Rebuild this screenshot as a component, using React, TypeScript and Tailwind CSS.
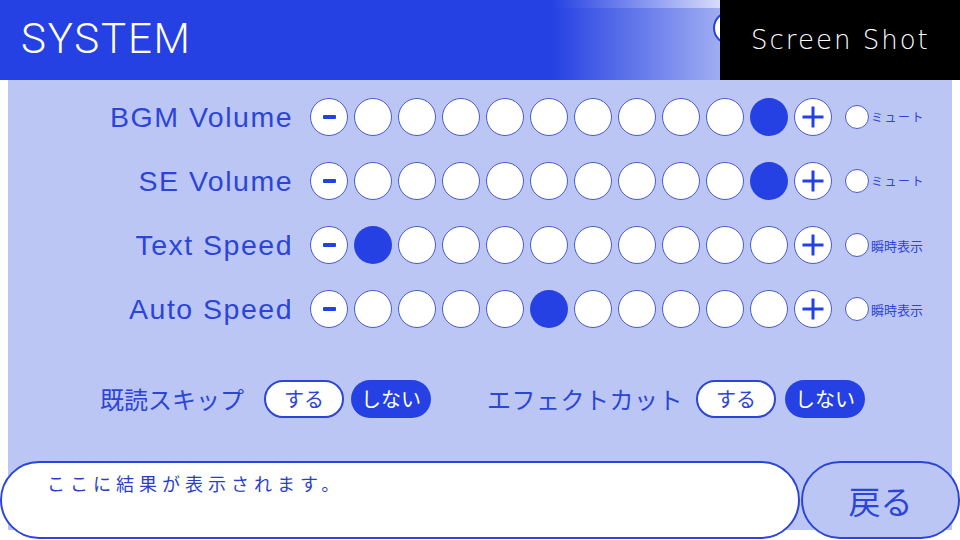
import React from "react";

const jp = '"Noto Sans CJK JP", "Noto Sans", sans-serif';

function Circle({ filled, children }: { filled?: boolean; children?: React.ReactNode }) {
  return (
    <div
      className={
        "w-[38px] h-[38px] rounded-full flex items-center justify-center shrink-0 " +
        (filled ? "bg-[#2541e3]" : "bg-white border-[1.5px] border-[#4a5ad0]")
      }
    >
      {children}
    </div>
  );
}

function Minus() {
  return <span className="block w-[13px] h-[3.5px] bg-[#2541e3] rounded-[1px]" />;
}

function Plus() {
  return (
    <svg width="24" height="24" viewBox="0 0 24 24">
      <path d="M12 1.5v21M1.5 12h21" stroke="#2541e3" strokeWidth="3" fill="none" />
    </svg>
  );
}

function SliderRow({ label, value, option, small }: { label: string; value: number; option: string; small?: boolean }) {
  return (
    <div className="flex items-center h-[38px]">
      <div
        className="w-[285px] text-right text-[28.5px] leading-none tracking-[1.5px] text-[#2b45d8]"
        style={{ fontFamily: '"Liberation Sans", Arial, sans-serif' }}
      >
        {label}
      </div>
      <div className="ml-[17px] flex gap-[6px]">
        <Circle>
          <Minus />
        </Circle>
        {Array.from({ length: 10 }).map((_, i) => (
          <Circle key={i} filled={i === value} />
        ))}
        <Circle>
          <Plus />
        </Circle>
      </div>
      <div className="ml-[13px] flex items-center gap-[2px]">
        <div className="w-[24px] h-[24px] rounded-full bg-white border-[1.5px] border-[#4a5ad0]" />
        <span
          className={(small ? "text-[12px] tracking-[1.5px]" : "text-[13px]") + " text-[#2b45d8] leading-none"}
          style={{ fontFamily: jp }}
        >
          {option}
        </span>
      </div>
    </div>
  );
}

function Pill({ label, active }: { label: string; active?: boolean }) {
  return (
    <div
      className={
        "w-[80px] h-[38px] rounded-full flex items-center justify-center text-[20px] leading-none " +
        (active ? "bg-[#2541e3] text-white" : "bg-white border-2 border-[#2b45d8] text-[#2b45d8]")
      }
    >
      {label}
    </div>
  );
}

export default function App() {
  return (
    <div className="relative w-[960px] h-[540px] bg-white overflow-hidden flex flex-col" style={{ fontFamily: jp }}>
      {/* header */}
      <div className="relative z-10 h-[80px] flex bg-[linear-gradient(to_right,#2541e3_57.5%,rgba(37,65,227,0)_79%)]">
        <div
          className="pl-[21px] pt-[18px] text-[42px] leading-none font-light tracking-[1.8px] text-white"
          style={{ fontFamily: 'Roboto, "Liberation Sans", sans-serif' }}
        >
          SYSTEM
        </div>
        <div className="ml-auto relative w-[240px] h-[80px] bg-black flex items-center pl-[31px]">
          <div className="absolute -left-[7px] top-[11px] w-[34px] h-[34px] rounded-full bg-white border-2 border-[#2b45d8] -z-10" />
          <span
            className="text-[26px] tracking-[2px] text-white font-light"
            style={{ fontFamily: '"DejaVu Sans", sans-serif' }}
          >
            Screen Shot
          </span>
        </div>
      </div>

      {/* panel */}
      <div className="mx-2 -mt-[72px] h-[522px] bg-[#bcc6f5] flex flex-col pt-[90px]">
        <div className="flex flex-col gap-[26px]">
          <SliderRow label="BGM Volume" value={9} option="ミュート" small />
          <SliderRow label="SE Volume" value={9} option="ミュート" small />
          <SliderRow label="Text Speed" value={0} option="瞬時表示" />
          <SliderRow label="Auto Speed" value={4} option="瞬時表示" />
        </div>

        <div className="mt-[52px] flex items-center pl-[92px] text-[#2b45d8]">
          <span className="text-[24px] leading-none">既読スキップ</span>
          <div className="ml-[20px] flex gap-[7px]">
            <Pill label="する" />
            <Pill label="しない" active />
          </div>
          <span className="ml-[56px] text-[24px] leading-none tracking-[0.5px]">エフェクトカット</span>
          <div className="ml-[13px] flex gap-[9px]">
            <Pill label="する" />
            <Pill label="しない" active />
          </div>
        </div>
      </div>

      {/* bottom bar */}
      <div className="relative -mt-[69px] flex h-[78px]">
        <div className="w-[800px] h-full rounded-[40px] bg-white border-2 border-[#2b45d8] pl-[45px] pt-[7px]">
          <span className="text-[18px] tracking-[5px] text-[#2a3fc9]">ここに結果が表示されます。</span>
        </div>
        <div className="ml-[1px] w-[159px] h-full rounded-full bg-[#bcc6f5] border-2 border-[#2b45d8] flex items-center justify-center">
          <span className="text-[32px] leading-none text-[#2b45d8]">戻る</span>
        </div>
      </div>
    </div>
  );
}
